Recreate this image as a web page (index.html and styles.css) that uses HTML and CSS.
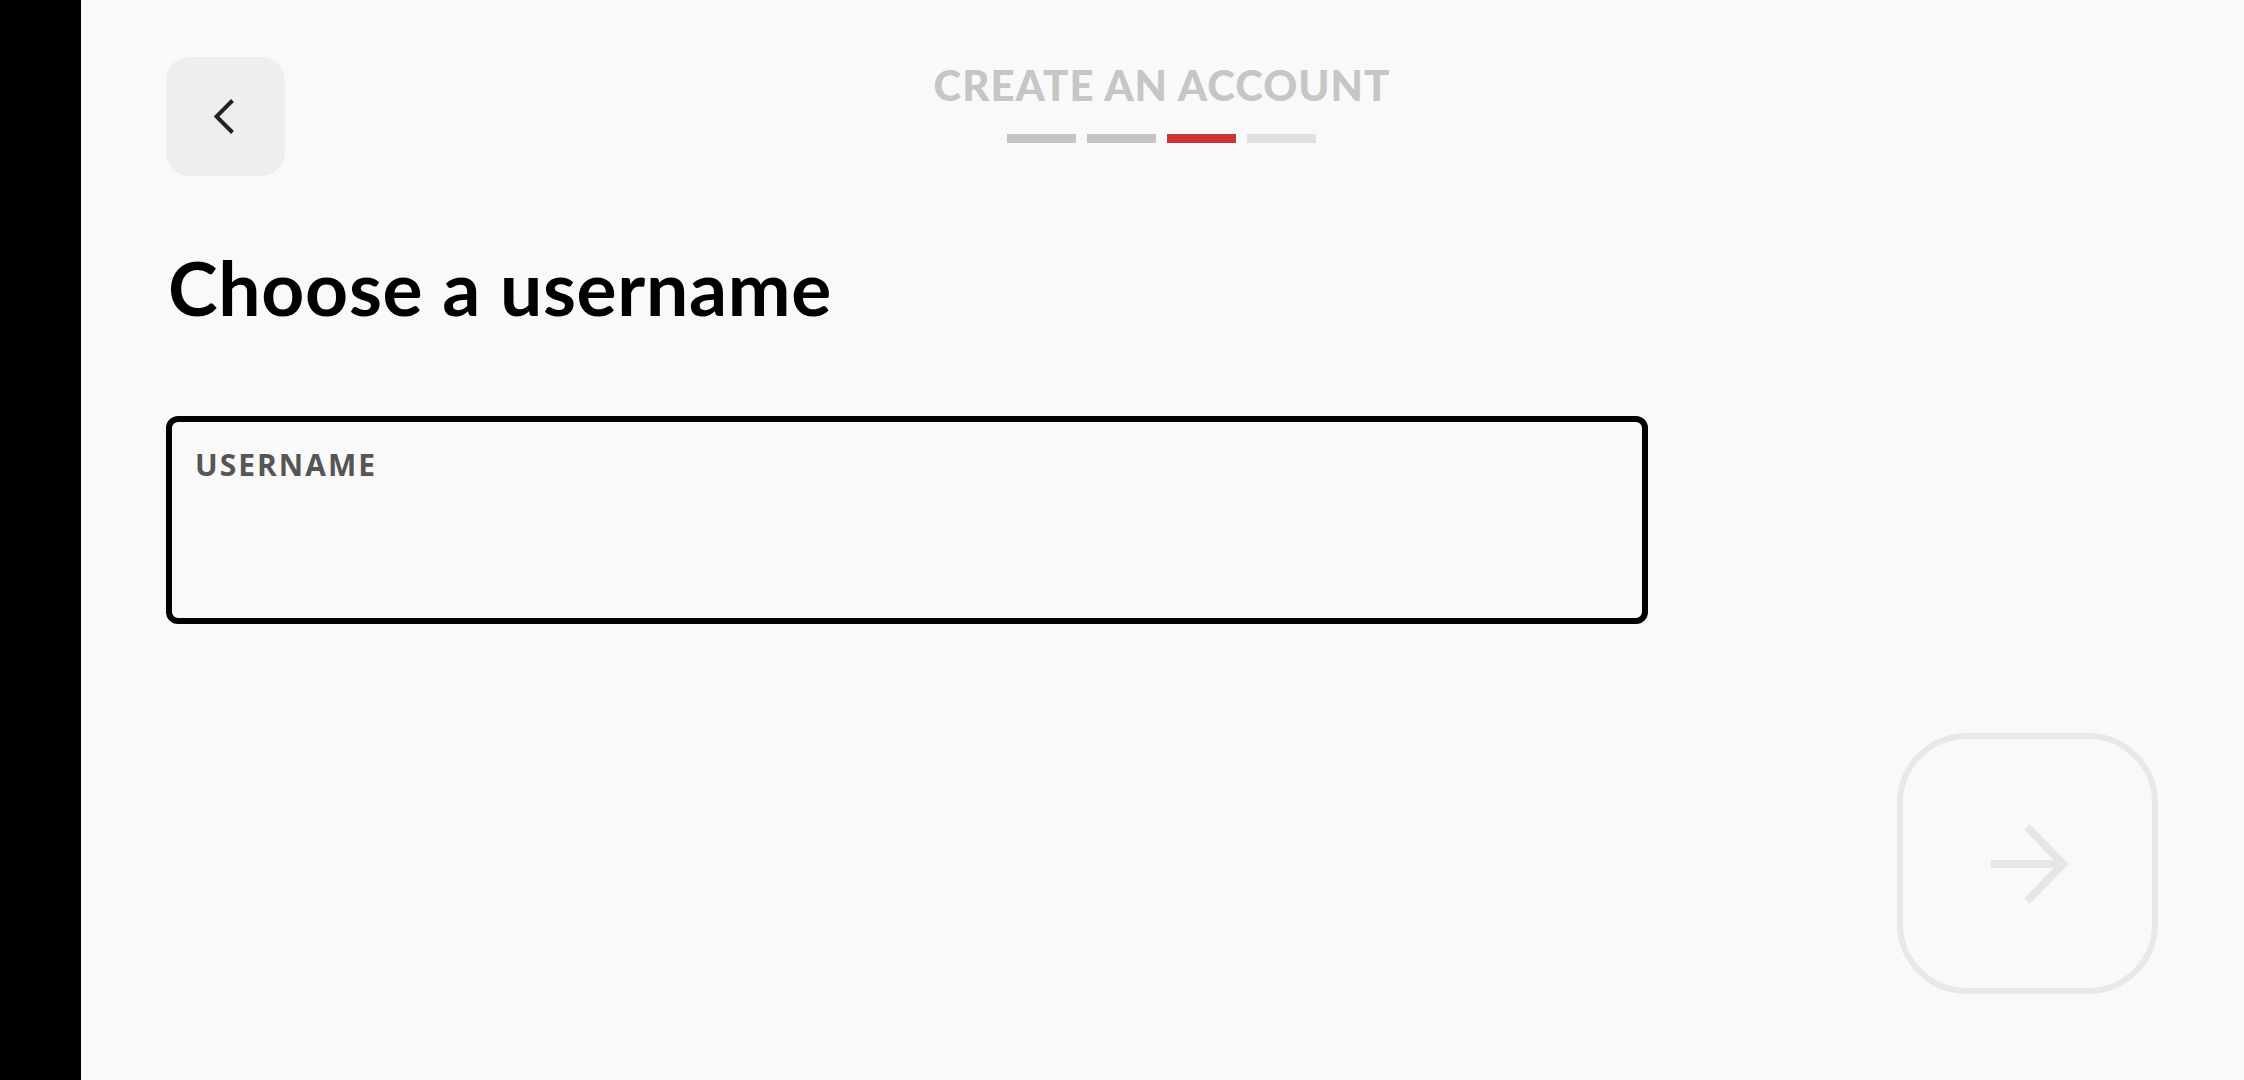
FILE: index.html
```html
<!DOCTYPE html>
<html lang="en">
<head>
<meta charset="utf-8">
<title>Create an account</title>
<link rel="stylesheet" href="styles.css">
</head>
<body>
<div class="app">
  <div class="edge"></div>
  <main class="screen">
    <header class="topbar">
      <button class="back" aria-label="Back">
        <svg width="40" height="40" viewBox="0 0 40 40"><path d="M26.5 3.5 L10.5 19.5 L26.5 35.5" fill="none" stroke="#222" stroke-width="4" stroke-linecap="butt" stroke-linejoin="miter"/></svg>
      </button>
      <div class="progress-wrap">
        <div class="eyebrow">CREATE AN ACCOUNT</div>
        <div class="steps">
          <span class="step done"></span>
          <span class="step done"></span>
          <span class="step current"></span>
          <span class="step"></span>
        </div>
      </div>
      <div class="spacer"></div>
    </header>
    <h1 class="heading">Choose a username</h1>
    <label class="field">
      <span class="field-label">USERNAME</span>
      <input class="field-input" type="text">
    </label>
    <div class="footer">
      <button class="next" aria-label="Next">
        <svg width="90" height="90" viewBox="0 0 90 90"><path d="M8 45 H80 M44 8 L80 45 L44 82" fill="none" stroke="#e6e6e6" stroke-width="8" stroke-linejoin="miter"/></svg>
      </button>
    </div>
  </main>
</div>
</body>
</html>
```
FILE: styles.css
```css
* { box-sizing: border-box; }
html, body { margin: 0; padding: 0; height: 100%; }
body { background: #f9f9f9; font-family: "Lato", "Open Sans", sans-serif; }
.app { display: flex; height: 1080px; }
.edge { width: 81px; background: #000; flex: none; }
.screen { flex: 1; display: flex; flex-direction: column; padding: 57px 86px 86px 85px; }
.topbar { display: grid; grid-template-columns: 1fr auto 1fr; align-items: start; }
.back { width: 119px; height: 119px; border: none; border-radius: 24px; background: #eeeeee; display: flex; align-items: center; justify-content: center; padding: 0; }
.progress-wrap { display: flex; flex-direction: column; align-items: center; }
.eyebrow { font-family: "Lato", sans-serif; font-weight: 900; font-size: 42px; line-height: 42px; letter-spacing: 1px; color: #c6c6c6; margin-top: 7px; }
.steps { display: flex; gap: 11px; margin-top: 28px; }
.step { width: 69px; height: 9px; background: #e0e0e0; }
.step.done { background: #c4c4c4; }
.step.current { background: #cc3535; }
.heading { margin: 66px 0 0 2px; font-family: "Lato", sans-serif; font-weight: 700; font-size: 75px; line-height: 90px; color: #000; letter-spacing: 0.7px; }
.field { margin-top: 84px; width: 1482px; height: 208px; border: 6px solid #000; border-radius: 12px; display: flex; flex-direction: column; padding: 25px 22px 0 23px; }
.field-label { font-family: "Open Sans", sans-serif; font-weight: 700; font-size: 30px; line-height: 36px; letter-spacing: 2px; color: #555; }
.field-input { border: none; background: transparent; outline: none; font-size: 36px; font-family: "Open Sans", sans-serif; margin-top: 10px; }
.footer { margin-top: auto; display: flex; justify-content: flex-end; }
.next { width: 261px; height: 261px; border: 6px solid #e8e8e8; border-radius: 70px; background: transparent; display: flex; align-items: center; justify-content: center; padding: 0; }
```
